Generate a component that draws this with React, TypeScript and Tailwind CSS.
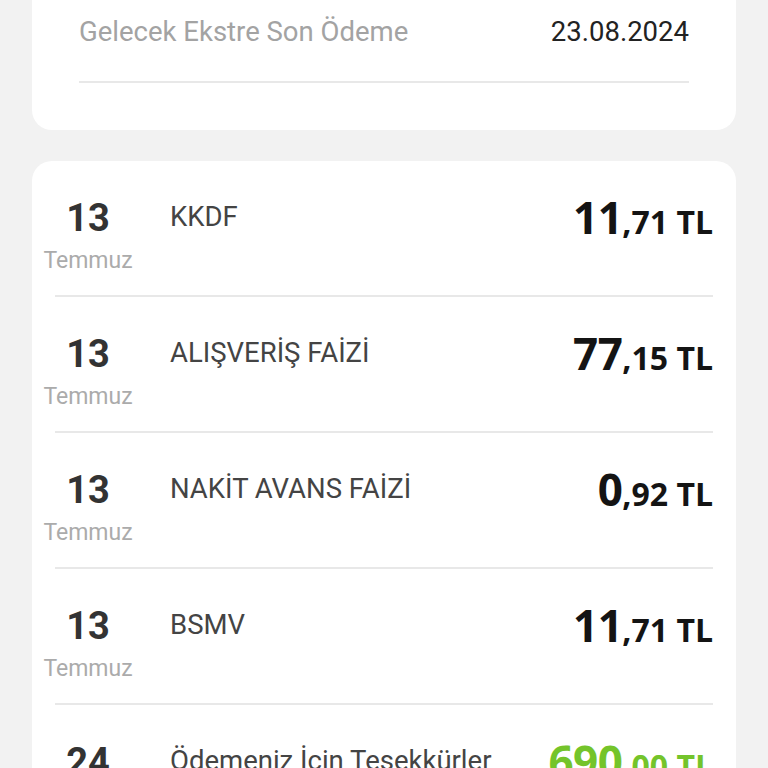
import React from 'react';

type Tx = {
  day: string;
  month: string;
  title: string;
  whole: string;
  cents: string;
  income?: boolean;
};

const transactions: Tx[] = [
  { day: '13', month: 'Temmuz', title: 'KKDF', whole: '11', cents: ',71 TL' },
  { day: '13', month: 'Temmuz', title: 'ALIŞVERİŞ FAİZİ', whole: '77', cents: ',15 TL' },
  { day: '13', month: 'Temmuz', title: 'NAKİT AVANS FAİZİ', whole: '0', cents: ',92 TL' },
  { day: '13', month: 'Temmuz', title: 'BSMV', whole: '11', cents: ',71 TL' },
  { day: '24', month: 'Temmuz', title: 'Ödemeniz İçin Teşekkürler', whole: '690', cents: ',00 TL', income: true },
];

function TxRow({ tx, last }: { tx: Tx; last: boolean }) {
  return (
    <div>
      <div className="flex items-start pt-[35px] pb-[20px]">
        <div className="w-[66px] flex flex-col items-center shrink-0">
          <span className="text-[38px] leading-[44px] font-bold text-[#333333]">{tx.day}</span>
          <span className="mt-[7px] text-[23px] leading-[28px] text-[#ababab] whitespace-nowrap">
            {tx.month}
          </span>
        </div>
        <p className="ml-[49px] mt-[5px] flex-1 text-[27.5px] leading-[32px] text-[#444444] whitespace-nowrap">
          {tx.title}
        </p>
        <p
          className={`font-['Open_Sans',sans-serif] font-bold leading-[42px] whitespace-nowrap ${
            tx.income ? 'text-[#74c42b]' : 'text-[#141414]'
          }`}
        >
          <span className="text-[44px] tracking-[-0.5px]">{tx.whole}</span>
          <span className="text-[32px]">{tx.cents}</span>
        </p>
      </div>
      {!last && <div className="h-[2px] bg-[#e8e8e8]" />}
    </div>
  );
}

export default function App() {
  return (
    <div className="min-h-screen bg-[#f2f2f2] px-[32px] pb-[32px] font-['Roboto',sans-serif]">
      <div className="bg-white rounded-b-[20px] px-[47px] pt-[16px] pb-[47px]">
        <div className="flex items-center justify-between h-[32px]">
          <span className="text-[27.5px] text-[#a3a3a3]">Gelecek Ekstre Son Ödeme</span>
          <span className="text-[27.5px] text-[#222222]">23.08.2024</span>
        </div>
        <div className="mt-[33px] h-[2px] bg-[#e8e8e8]" />
      </div>

      <div className="mt-[31px] bg-white rounded-[20px] px-[23px]">
        {transactions.map((tx, i) => (
          <TxRow key={i} tx={tx} last={i === transactions.length - 1} />
        ))}
      </div>
    </div>
  );
}
